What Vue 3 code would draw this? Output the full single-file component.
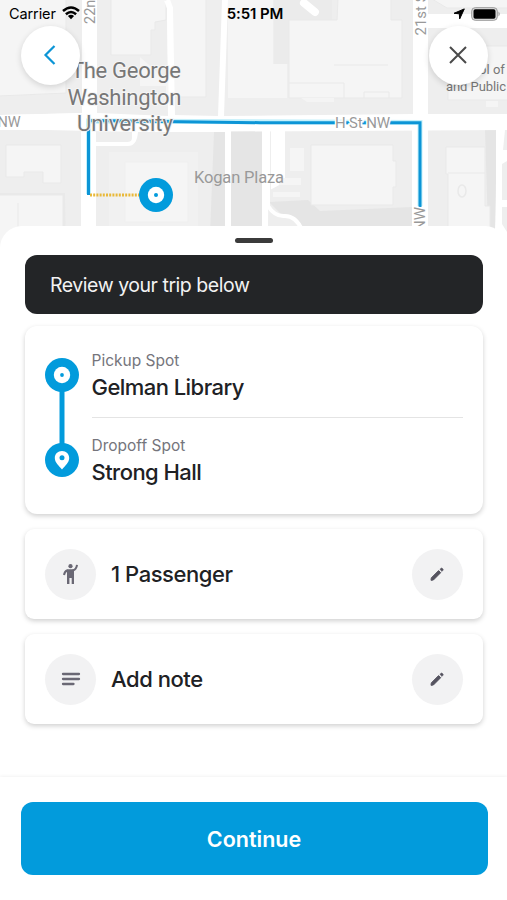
<template>
  <div class="screen">
    <svg class="map" viewBox="0 0 507 260" width="507" height="260">
      <rect width="507" height="260" fill="#fff" />

      <!-- city blocks -->
      <g fill="#eeeeee">
        <path d="M0 0H82V113L0 115Z" />
        <path d="M97 0H167L168 116L97 113Z" />
        <path d="M172 0H222L218 116L174 115Z" />
        <path d="M228 0H413V114L224 116Z" />
        <path d="M428 0H507V14H428Z" />
        <path d="M428 28H507V114H428Z" />
        <path d="M0 130H81V260H0Z" />
        <path d="M96 146H128Q137 146 138 132H225V260H96Z" />
        <path d="M96 131H132V138Q132 142 127 142H96Z" />
        <path d="M231 130H262V260H231Z" fill="#e5e5e5" />
        <path d="M269 130H271V206L285 214L302 226H268Z" />
        <path d="M285 130H412V228H302Q297 215 282 215L268 204V191L285 182Z" />
        <path d="M428 130H497L495 230H428Z" />
        <path d="M505 130H507V150L503 150Z" />
        <path d="M502 164L507 161V200H502ZM502 207H507V232L502 224Z" />
      </g>
      <path d="M0 193H65L66 260H0Z" fill="#e9e9e9" />
      <path d="M214 132H225V260H209Z" fill="#e5e5e5" />
      <path d="M269 202L308 200L320 211L412 207V228H302Q297 215 282 215Z" fill="#e5e5e5" />
      <path d="M485 130H497L495 230H488Z" fill="#e5e5e5" />
      <path d="M274 0H332V64H274Z" fill="#ebebeb" />

      <!-- buildings -->
      <g fill="#f5f5f5" stroke="#e9e9e9" stroke-width="1">
        <path d="M-1 -1H66V93L-1 96Z" />
        <path d="M140 57V86H166V97H206V-1H170L172 85Z" stroke="none" />
        <path d="M111 -1H166V20L155 22V30H151V55H111Z" />
        <path d="M206 0V97H175" fill="none" />
        <path d="M228 0H273V64H287V98H228Z" stroke="none" />
        <path d="M289 20H337L338 -1H391V20H402V98H289Z" />
        <path d="M289 83H344V98M334 65H388M364 98V92H389V98" fill="none" />
        <path d="M432 -1H508V8H447Z" />
        <path d="M448 46H508V100H448Z" />
        <path d="M486 101H498V107H486Z" stroke="none" />
        <path d="M6 145H61V183H43V172H24V177H6Z" />
        <path d="M0 195H63V260H0M18 203V230" />
        <path d="M109 152H198V260H109Z" fill="#f1f1f1" stroke="none" />
        <path d="M125 162H188V222H125Z" stroke="#efefef" />
        <path d="M290 148H304V171H290ZM279 178H301V185H279ZM273 192H300V197H273Z" stroke="none" />
        <path d="M311 145H393V161H396V187H393V205H311Z" />
        <path d="M446 147H485V206H490V230H448V174H446Z" />
        <path d="M448 173H485" fill="none" />
        <ellipse cx="462" cy="191" rx="4" ry="6" stroke-width="1.500" />
      </g>
      <path d="M167 0L170 8L172 116" stroke="#fff" stroke-width="6" fill="none" />
      <path d="M304 3L315 12" stroke="#fff" stroke-width="8" stroke-linecap="round" />
      <path d="M301 98H334V102H307Z" fill="#f4f4f4" />
      <path d="M0 115L90 113L140 117L507 114V130L140 132L0 129Z" fill="#fff" />
      <path d="M268 130V206Q275 217 285 216Q296 216 302 230M498 130V230M498 203H507M498 152L507 158" fill="none" stroke="#fff" stroke-width="4" />

      <!-- route -->
      <path d="M88.500 194V121L420 122.500V206" fill="none" stroke="#c3f0fb" stroke-width="5" />
      <path d="M88.500 195V120.500L260 122.700H420V207" fill="none" stroke="#0c95d6" stroke-width="3" />
      <path d="M90 195H141" stroke="#e9b93a" stroke-width="3" stroke-dasharray="2 1.2" />

      <!-- labels -->
      <g class="map-labels" fill="#999">
        <text x="-2.500" y="127" font-size="14.500">NW</text>
        <text transform="translate(95 24) rotate(-90)" font-size="14.500">22nd</text>
        <text transform="translate(426 35.500) rotate(-90)" font-size="15">21st S</text>
        <text transform="translate(425 231) rotate(-90)" font-size="15" class="halo">NW</text>
        <text x="335" y="127.500" font-size="15" textLength="55" class="halo">H St NW</text>
        <text x="194" y="183" font-size="16.500" textLength="90">Kogan Plaza</text>
      </g>
      <g class="map-labels halo-soft" fill="#777">
        <text x="71" y="78" font-size="22" textLength="110">The George</text>
        <text x="67.500" y="104.500" font-size="22" textLength="114">Washington</text>
        <text x="77" y="130.500" font-size="22" textLength="96">University</text>
      </g>
      <g class="map-labels" fill="#777" font-size="13">
        <text x="450" y="74">School of</text>
        <text x="446" y="91" textLength="60">and Public</text>
      </g>

      <circle cx="156" cy="195" r="17" fill="#029bdc" />
      <circle cx="156" cy="195" r="8.200" fill="#fff" />
      <circle cx="156" cy="195" r="2" fill="#029bdc" />
    </svg>

    <header class="top">
      <div class="status">
        <div class="carrier">
          <span>Carrier</span>
          <svg width="18" height="14" viewBox="0 0 18 14">
            <g fill="none" stroke="#000" stroke-width="2.500">
              <path d="M1 5Q9 -2 17 5" />
              <path d="M3.900 8.300Q9 3.800 14.100 8.300" />
            </g>
            <path d="M5.900 10.100Q9 7.600 12.100 10.100L9 13.300Z" />
          </svg>
        </div>
        <strong>5:51 PM</strong>
        <div class="power">
          <svg width="12" height="12" viewBox="0 0 12 12">
            <path d="M11.300 .9L6.700 10.900L6.300 5.800L1 5.300Z" stroke="#000" stroke-linejoin="round" />
          </svg>
          <svg width="30" height="14" viewBox="0 0 30 14">
            <rect x=".7" y=".7" width="25.600" height="12.600" rx="3.500" fill="#ddd" stroke="#999" />
            <rect x="2.500" y="2.300" width="22" height="9.400" rx="1.800" />
            <path d="M27.500 4.500Q30 7 27.500 9.500Z" fill="#999" />
          </svg>
        </div>
      </div>
      <div class="nav">
        <button class="round-btn" aria-label="Back">
          <svg width="24" height="24" viewBox="0 0 24 24">
            <path d="M16.500 3L7.500 12L16.500 21" fill="none" stroke="#0c95d6" stroke-width="2.200" />
          </svg>
        </button>
        <button class="round-btn" aria-label="Close">
          <svg width="24" height="24" viewBox="0 0 24 24">
            <path d="M4 4L20 20M20 4L4 20" fill="none" stroke="#4a4a4a" stroke-width="2" />
          </svg>
        </button>
      </div>
    </header>

    <main class="sheet">
      <div class="handle"></div>
      <div class="banner">Review your trip below</div>

      <section class="card trip">
        <div class="line">
          <svg width="34" height="120" viewBox="0 0 34 120">
            <path d="M17 17V102" stroke="#029bdc" stroke-width="5" />
            <circle cx="17" cy="17" r="17" fill="#029bdc" />
            <circle cx="17" cy="17" r="8.200" fill="#fff" />
            <circle cx="17" cy="17" r="1.900" fill="#029bdc" />
            <circle cx="17" cy="102" r="17" fill="#029bdc" />
            <path d="M17 93C12.800 93 9.800 96 9.800 100C9.800 104.500 13.700 107.500 17 111.500C20.300 107.500 24.200 104.500 24.200 100C24.200 96 21.200 93 17 93Z" fill="#fff" />
            <circle cx="17" cy="99.800" r="2.500" fill="#029bdc" />
          </svg>
        </div>
        <div class="stops">
          <div v-for="stop in stops" :key="stop.label" class="stop">
            <span class="stop-label">{{ stop.label }}</span>
            <span class="stop-name">{{ stop.name }}</span>
          </div>
        </div>
      </section>

      <section v-for="row in rows" :key="row.icon" class="card option">
        <span class="bubble">
          <svg v-if="row.icon === 'person'" width="24" height="24" viewBox="0 0 24 24">
            <circle cx="11.500" cy="4.200" r="2.100" fill="#6a6874" />
            <path d="M18 2.800Q17.500 7.500 13.600 8.400M8.500 8.200Q5.500 9.300 5 13" fill="none" stroke="#6a6874" stroke-width="2" />
            <path d="M8 7.200H15V21.900H12.700V16H10.400V21.900H8Z" fill="#6a6874" />
          </svg>
          <svg v-else width="24" height="24" viewBox="0 0 24 24">
            <path d="M4 7H20M4 12H20M4 17H14.500" stroke="#6a6874" stroke-width="2.300" stroke-linecap="round" />
          </svg>
        </span>
        <span class="option-name">{{ row.text }}</span>
        <button class="bubble" aria-label="Edit">
          <svg width="16" height="16" viewBox="0 0 16 16" fill="#55535f">
            <path d="M2.300 11.900L9.600 4.600L11.700 6.700L4.400 14L2 14.300Z" stroke="#55535f" stroke-linejoin="round" />
            <path d="M10.900 3.300L12 2.200Q12.600 1.700 13.200 2.300L14 3.100Q14.600 3.700 14 4.300L13 5.400Z" stroke="#55535f" stroke-width=".5" />
          </svg>
        </button>
      </section>
    </main>

    <footer class="footer">
      <button class="continue">Continue</button>
    </footer>
  </div>
</template>

<script setup>
const stops = [
  { label: "Pickup Spot", name: "Gelman Library" },
  { label: "Dropoff Spot", name: "Strong Hall" }
]

const rows = [
  { icon: "person", text: "1 Passenger" },
  { icon: "note", text: "Add note" }
]
</script>

<style>
body {
  margin: 0;
  background: #fff;
}
</style>

<style scoped>
.screen {
  position: relative;
  width: 507px;
  height: 900px;
  display: flex;
  flex-direction: column;
  overflow: hidden;
  font-family: Inter, "Liberation Sans", sans-serif;
  color: #202124;
}

svg {
  display: block;
  flex-shrink: 0;
}

button {
  border: none;
  padding: 0;
  font-family: inherit;
  cursor: pointer;
}

.map {
  position: absolute;
  top: 0;
  left: 0;
}

.map-labels {
  font-family: Roboto, sans-serif;
}

.halo {
  paint-order: stroke;
  stroke: #fff;
  stroke-width: 3px;
}

.halo-soft {
  paint-order: stroke;
  stroke: #f5f5f5;
  stroke-width: 2px;
}

.top {
  position: relative;
  height: 226px;
  flex-shrink: 0;
}

.status {
  height: 25px;
  padding: 1px 6px 0 9px;
  display: grid;
  grid-template-columns: 1fr auto 1fr;
  align-items: center;
  font-size: 14.5px;
  letter-spacing: -0.1px;
  color: #000;
}

.status strong {
  font-size: 15px;
  font-weight: 600;
}

.carrier,
.power {
  display: flex;
  align-items: center;
  gap: 6px;
}

.carrier svg {
  margin-top: -2px;
}

.power {
  justify-content: flex-end;
}

.nav {
  display: flex;
  justify-content: space-between;
  padding: 0 19.5px 0 20.5px;
}

.round-btn {
  width: 59px;
  height: 59px;
  border-radius: 50%;
  background: #fff;
  display: flex;
  align-items: center;
  justify-content: center;
  box-shadow: 0 2px 6px rgba(0, 0, 0, 0.14);
}

.round-btn svg {
  margin-top: -1px;
}

.sheet {
  position: relative;
  flex: 1;
  box-sizing: border-box;
  padding: 12px 24.5px 0 25px;
  border-radius: 22px 22px 0 0;
  background: #fff;
}

.handle {
  width: 38px;
  height: 5px;
  margin: 0 auto 12px;
  border-radius: 3px;
  background: #3b3b3b;
}

.banner {
  height: 59px;
  line-height: 60px;
  padding-left: 25px;
  margin-bottom: 12px;
  border-radius: 12px;
  background: #232527;
  color: #f2f2f2;
  font-size: 19.5px;
  letter-spacing: -0.46px;
}

.card {
  box-sizing: border-box;
  border-radius: 12px;
  background: #fff;
  box-shadow: 0 2px 5px rgba(0, 0, 0, 0.19);
}

.trip {
  height: 188px;
  margin-bottom: 15px;
  padding: 0 20px;
  display: flex;
  gap: 12.5px;
}

.line {
  padding-top: 32px;
}

.stops {
  flex: 1;
}

.stop {
  box-sizing: border-box;
  height: 91px;
  padding-top: 25px;
  display: flex;
  flex-direction: column;
}

.stop + .stop {
  padding-top: 18px;
  border-top: 1px solid #e4e4e4;
}

.stop-label {
  font-size: 15.5px;
  line-height: 20px;
  color: #75757c;
}

.stop-name {
  font-size: 22px;
  font-weight: 450;
  letter-spacing: -0.55px;
  line-height: 33px;
}

.option {
  height: 90px;
  margin-bottom: 15px;
  padding: 0 20px;
  border-radius: 9px;
  display: flex;
  align-items: center;
}

.bubble {
  width: 51px;
  height: 51px;
  border-radius: 50%;
  background: #f2f2f3;
  display: flex;
  align-items: center;
  justify-content: center;
}

.option-name {
  flex: 1;
  margin-left: 15px;
  font-size: 22px;
  font-weight: 450;
  letter-spacing: -0.45px;
}

.footer {
  position: relative;
  height: 123px;
  flex-shrink: 0;
  box-sizing: border-box;
  padding: 25px 19.5px 25px 20.5px;
  background: #fff;
  box-shadow: 0 -1px 3px rgba(0, 0, 0, 0.05);
}

.continue {
  width: 100%;
  height: 73px;
  border-radius: 12px;
  background: #029bdc;
  color: #fff;
  font-size: 21.5px;
  font-weight: 600;
}
</style>
